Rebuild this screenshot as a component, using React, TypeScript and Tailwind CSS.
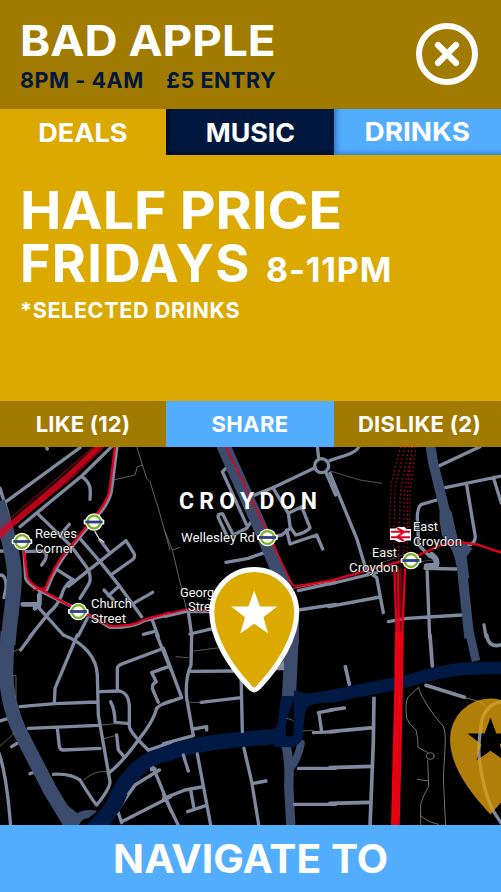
import React from "react";

const GREY = "#7f899f";
const SLATE = "#3c4c6c";
const NAVY = "#001a45";
const RED = "#e2001f";

type TileProps = { x: number; y: number; children: React.ReactNode };

// Each map sheet is drawn at three units to the pixel.
function Tile({ x, y, children }: TileProps) {
  return <g transform={`translate(${x} ${y}) scale(0.33333)`}>{children}</g>;
}

function Roundel({ x, y }: { x: number; y: number }) {
  return (
    <g transform={`translate(${x} ${y})`}>
      <circle r="8.8" fill="#fff" />
      <rect x="-10.3" y="-2.6" width="20.6" height="5.2" rx="1" fill="#fff" />
      <circle r="6.4" fill="#fff" stroke="#79b51c" strokeWidth="2.3" />
      <rect x="-8.6" y="-1.4" width="17.2" height="2.8" fill="#2d3e8c" />
    </g>
  );
}

function Label({ x, y, w, children }: { x: number; y: number; w: number; children: string }) {
  return (
    <text x={x} y={y} textLength={w} lengthAdjust="spacingAndGlyphs" fontSize="13.5" fill="#f4f4f4" stroke="#000" strokeWidth="1" paintOrder="stroke" strokeLinejoin="round">
      {children}
    </text>
  );
}

const pin = "M0 78 C-2 78 -4 76 -6 73.5 C-24 54 -42.5 26 -42.5 0 A42.5 42.5 0 0 1 42.5 0 C42.5 26 24 54 6 73.5 C4 76 2 78 0 78 Z";
const star = "M0 -21.5 L5.8 -5.5 L23 -5.5 L9.2 5.2 L14 21.5 L0 11.8 L-14 21.5 L-9.2 5.2 L-23 -5.5 L-5.8 -5.5 Z";

function CityMap() {
  return (
    <svg className="block h-[378px] w-full bg-black font-['Roboto',sans-serif] font-normal" viewBox="0 447 501 378" fill="none">
      <g strokeLinecap="round" strokeLinejoin="round">
        <Tile x={0} y={445}>
          <g stroke={GREY} strokeWidth="10">
            <path d="M15 172 L240 8 M135 -4 L142 12 M335 5 L245 93 L60 245 M245 95 C275 115 272 135 270 163 M112 205 L215 305 L262 370 Q278 400 265 420 L240 460" />
            <path d="M0 318 H20 M75 320 L130 318 Q145 325 135 345 L125 360 M235 275 L300 350 L360 425 L425 515 M300 285 L325 318 M205 424 L378 287 L402 325 Q406 335 400 342 L335 388 M165 370 L220 405" />
            <path d="M215 405 Q190 425 185 450 Q170 485 150 500 L90 575 M120 440 L118 490 L190 570 M312 435 L340 465 M325 452 L355 425 M400 475 L458 442 M455 520 L475 575 M430 568 L462 560 M262 520 L235 572 M180 270 L208 238" />
            <path d="M0 390 Q20 390 18 430 L12 458" />
            <path strokeWidth="14" d="M68 478 H118 M118 450 V478 L105 490" />
            <path d="M351 5 L334 140 Q324 180 290 215 L210 312 Q168 360 140 435 M72 320 L77 400 Q83 417 120 437 L200 477 Q260 505 330 547 Q400 548 430 528 L510 508" />
            <path d="M0 130 L22 200 L28 225" />
          </g>
          <path stroke={SLATE} strokeWidth="45" strokeLinecap="butt" d="M-8 170 C12 230 38 310 43 380 C46 440 30 510 24 600" />
          <g stroke={RED}>
            <path strokeWidth="18" opacity=".75" d="M300 3 L200 98 L-5 270" />
            <path strokeWidth="2.5" d="M284 3 L135 132 L-5 250 M295 3 L140 145 L-5 268 M305 3 L175 125 L-5 283 M315 3 L215 100 L40 240 L-5 290" />
            <path strokeWidth="7" d="M345 5 L328 140 Q318 175 287 210 L200 318 Q164 358 133 437" />
            <path strokeWidth="7" d="M72 320 L82 395 Q85 412 120 432 L205 480 Q260 505 330 543 Q400 545 430 525 L510 503" />
            <path strokeWidth="4" d="M100 435 L135 428" />
          </g>
          <path stroke="#777" strokeWidth="2.5" d="M410 5 L440 100 L450 110 L475 190 L510 315 M340 105 L405 90 L412 65 L428 60" />
          <path stroke="#ddd" strokeWidth="4" d="M285 260 L298 282 L312 291" />
        </Tile>

        <Tile x={165} y={445}>
          <g stroke={GREY} strokeWidth="10">
            <path d="M183 70 L172 80 L245 240 M187 275 L160 218 Q156 205 173 207 L205 270 L245 250 L255 235 M183 352 L250 340 L300 322" />
            <path d="M265 152 L330 125 L450 68 M456 -5 L461 40 M484 85 L512 150 M325 130 L370 205 L376 250 L350 270 L325 275 M370 205 L410 185 L435 248 Q425 262 392 270 L375 245 M365 255 L375 297 L455 270 L473 312" />
            <circle cx="470" cy="62" r="21" />
            <path d="M400 437 L512 412 M400 495 L512 478 M70 500 L80 570 M75 567 L145 550 M0 514 L60 500 H140" />
          </g>
          <path stroke={SLATE} strokeWidth="42" strokeLinecap="butt" d="M172 -5 L280 235 L355 415 L382 500 L380 600" />
          <path stroke={RED} strokeWidth="5" d="M180 0 L260 165 L380 415 Q384 424 400 422 L512 404 M0 508 L60 494 H130" />
          <path stroke="#ff4055" strokeWidth="3" d="M385 430 L512 407" />
          <path stroke="#777" strokeWidth="2.5" d="M0 260 L22 315 L45 307 M22 315 L65 495" />
        </Tile>

        <Tile x={330} y={445}>
          <g stroke={GREY} strokeWidth="10">
            <path d="M0 46 L50 30 Q80 20 87 5 M0 85 L80 280 L110 380 L140 397 L160 503 M-4 485 L150 456 M0 417 L140 383" />
            <path d="M325 64 L450 5 M335 130 L515 93 M410 120 L436 275 Q435 297 415 300 M490 97 L514 175 M320 165 L275 178 Q262 185 262 220 L266 300 L300 335 M285 370 L380 372 M291 370 L299 575 M175 530 L230 520 L395 510 M462 540 L468 575" />
            <path strokeWidth="18" d="M305 330 Q325 345 318 362 L290 364" />
          </g>
          <path stroke="#666" strokeWidth="2.5" d="M0 78 L90 105 L155 115" />
          <path stroke={SLATE} strokeWidth="30" strokeLinecap="butt" d="M300 -5 L310 55 L343 190 L370 290 Q397 340 400 410 L418 580" />
          <path fill={SLATE} d="M330 165 L365 200 L383 285 L428 310 L410 335 L418 400 L385 400 L378 335 L335 270 L328 225 Z" />
          <path stroke={RED} strokeWidth="3.5" strokeDasharray="4 8" strokeLinecap="butt" d="M212 5 L183 120 L178 265 M225 5 L195 130 L190 370 M238 5 L211 140 L205 370 M248 5 L223 140 L221 370 M258 5 L240 140 L238 265 M246 5 L233 140 L231 370" />
          <path stroke={RED} strokeWidth="7" strokeLinecap="butt" d="M193 375 L201 590 M204 370 L207 590 M225 370 L216 590" />
          <path stroke={RED} strokeWidth="3" strokeLinecap="butt" d="M213 370 L213 590" />
          <path stroke={RED} strokeWidth="7" d="M0 408 L130 372 L240 342 L340 297 L395 293 L440 298 L515 323" />
          <path stroke="#555" strokeWidth="2.5" d="M150 355 L220 330 M270 350 L310 345" />
        </Tile>

        <Tile x={0} y={635}>
          <path stroke={NAVY} strokeWidth="48" strokeLinecap="butt" d="M260 600 Q335 540 360 470 Q410 375 515 348" />
          <g stroke={GREY} strokeWidth="10">
            <path d="M95 0 L62 45 M190 0 C255 25 290 70 292 120 L295 240 L330 440 Q330 460 290 510 Q280 500 240 435 Q210 415 160 418 M232 0 L165 160 L163 203 M60 215 L165 206 L290 201 M85 280 L295 271 M172 280 L178 335 Q180 345 190 345 L300 340" />
            <path d="M300 170 L360 168 Q385 175 388 210 L388 275 Q392 295 445 345 M352 165 V98 Q355 90 370 85 L485 42 M470 0 L512 103 M505 95 L455 113 L469 140 Q450 150 461 170 L475 202 M332 200 Q345 225 345 262 L382 265 M350 300 L355 345 L372 365" />
            <path d="M325 415 Q365 385 415 315 Q460 260 470 220 Q480 208 512 198 M445 345 L512 323 M90 416 L105 411 M-3 355 Q20 420 32 575 M0 258 L25 250 L60 320 L35 335 M352 525 L405 450 L478 405 M460 398 L514 530 M352 525 L365 563 M365 560 L512 485" />
          </g>
          <path fill={GREY} d="M450 397 h20 v12 h-20z" />
          <path stroke={SLATE} strokeWidth="43" strokeLinecap="butt" d="M23 -10 L18 110 Q20 200 57 285 L150 465 L225 590" />
          <path fill={SLATE} d="M190 500 L232 535 Q255 520 292 528 L265 550 Q245 548 235 575 H200 Z" />
          <path stroke="#776f6b" strokeWidth="2.5" d="M40 50 L58 42 M38 122 H48 V190 M0 333 L45 293 M252 434 Q285 405 320 410 M305 270 L380 263 M308 312 L345 302" />
          <path stroke={NAVY} strokeWidth="48" strokeLinecap="butt" d="M260 600 Q335 540 360 470" />
        </Tile>

        <Tile x={165} y={635}>
          <path stroke={SLATE} strokeWidth="42" strokeLinecap="butt" d="M381 -10 L372 185" />
          <path stroke={SLATE} strokeWidth="28" strokeLinecap="butt" d="M362 325 Q376 390 371 450 L378 580" />
          <path stroke={SLATE} strokeWidth="23" d="M408 325 Q400 370 376 400" />
          <path stroke={NAVY} strokeWidth="46" strokeLinecap="butt" d="M-10 362 C90 320 200 318 350 302" />
          {/* Underpass ramps around the central island */}
          <path fill={NAVY} fillRule="evenodd" d="M348 184 L386 184 L388 166 L425 176 L515 162 V200 L445 208 Q419 212 418 250 L414 305 Q405 335 375 337 L325 335 V285 Q338 280 341 240 Z M386 192 L372 235 L363 270 L362 300 Q374 312 386 298 Z" />
          <g stroke={GREY} strokeWidth="10">
            <path d="M80 0 L78 90 Q60 130 65 190 L85 302 L-4 326 M78 109 L210 108 M-5 40 L50 188 L-4 207 M228 110 L232 290 M108 202 L228 188 M85 282 L125 275 V285 M55 360 L70 408 M97 357 L138 575 M-4 490 L60 465 L110 456 M78 470 L86 515 M68 530 L122 512 M-4 480 L42 575 M237 340 L260 440 L282 575 M265 445 L303 438 M400 400 H512 M388 508 H512 M460 233 L502 225 M462 235 L470 290 M445 293 L512 290" />
          </g>
          <path fill="#7f899f" d="M330 106 L357 75 V106 Z" />
          <path stroke="#706a67" strokeWidth="2.5" d="M85 48 L165 38 M33 65 L70 68 M68 202 H108 M365 250 L385 256 M415 288 L445 286" />
        </Tile>

        <Tile x={330} y={635}>
          <path stroke={NAVY} strokeWidth="38" strokeLinecap="butt" d="M-5 186 Q90 167 190 147 C250 137 330 103 415 101 L520 98" />
          <path stroke={SLATE} strokeWidth="26" strokeLinecap="butt" d="M418 -10 L438 78" />
          <g stroke={GREY} strokeWidth="11">
            <path d="M46 95 L58 148 M0 225 L43 219 M0 290 L130 278 M0 398 L125 394 M0 505 L120 502 M300 0 L307 93 M470 0 Q475 32 500 32 L518 29 M288 151 L403 187" />
            <path strokeLinecap="butt" d="M132 185 L130 320 L120 575" />
            <path strokeWidth="10" d="M515 200 Q470 207 456 255 Q443 330 448 370 Q460 470 488 525 L514 565" />
          </g>
          <path stroke="#77716e" strokeWidth="3" d="M265 158 L235 185 Q224 200 230 250 Q235 265 258 285 Q265 310 264 337 L292 352 M293 375 L296 455 Q275 490 272 510 V575 M262 433 L296 438 M272 542 Q290 560 325 568 M265 158 Q280 205 340 275 Q348 290 345 340 L340 430 L347 575 M405 188 L450 200 L478 222" />
          <ellipse cx="301" cy="363" rx="12" ry="10" stroke="#77716e" strokeWidth="3" />
          <path stroke="#f20012" strokeWidth="26" strokeLinecap="butt" d="M208 -10 L206 150 L196 575" />
          <path stroke="#970817" strokeWidth="1.5" d="M203 -10 L204 120 L191 575 M213 0 L211 200 L202 575" />
        </Tile>
      </g>

      <g>
        <text x="179" y="509" fontSize="23" fontWeight="700" fill="#fff" textLength="138" lengthAdjust="spacing">CROYDON</text>
        <Label x={35} y={538} w={42}>Reeves</Label>
        <Label x={35} y={552.5} w={39}>Corner</Label>
        <Label x={91} y={608} w={41}>Church</Label>
        <Label x={91} y={622.5} w={35}>Street</Label>
        <Label x={181} y={542} w={74}>Wellesley Rd</Label>
        <Label x={180} y={596.5} w={41}>George</Label>
        <Label x={188} y={610.5} w={34}>Street</Label>
        <Label x={413} y={531} w={25}>East</Label>
        <Label x={413} y={545.5} w={49}>Croydon</Label>
        <Label x={372} y={557} w={25}>East</Label>
        <Label x={349} y={571.5} w={49}>Croydon</Label>
      </g>
      <Roundel x={22} y={541.5} />
      <Roundel x={94} y={522} />
      <Roundel x={78.3} y={611.5} />
      <Roundel x={267.5} y={537.5} />
      <Roundel x={411} y={560.5} />
      <g transform="translate(400.5 534.5)">
        <path fill="#fff" d="M-10.5 -6 H-5 L-3 -7.5 H4 L6 -5.5 H10.5 V6 H6 L3 7.5 H-2 L-6 5.5 H-10.5 Z" />
        <path stroke="#e2001f" strokeWidth="2" d="M-9.5 -2.7 H9.5 M-9.5 2.7 H9.5 M-3.5 -6.3 L3.5 -2.7 L-3.5 2.7 L3.5 6.3" />
      </g>

      <g transform="translate(490.5 739)">
        <path fill="#dc9f0c" fillOpacity=".8" fillRule="evenodd" d="M0 75.5 C-9 65 -40.5 34 -40.5 0 A40.5 40.5 0 0 1 40.5 0 C40.5 34 9 65 0 75.5 Z M0 -21.5 L-5.8 -5.5 H-23 L-9.2 5.2 L-14 21.5 L0 11.8 L14 21.5 L9.2 5.2 L23 -5.5 H5.8 Z" />
      </g>
      <g transform="translate(254.2 612)">
        <path d={pin} fill="#dba900" stroke="#fff" strokeWidth="5" />
        <path d={star} fill="#fff" />
      </g>
    </svg>
  );
}

export default function App() {
  return (
    <main className="flex h-[892px] w-[501px] flex-col overflow-hidden bg-[#dba900] font-['Inter','Liberation_Sans',sans-serif] font-bold text-white">
      <header className="flex h-[109px] shrink-0 items-start justify-between bg-[#a17a00] pr-[23px] pl-5">
        <div className="pt-[19px] whitespace-nowrap">
          <h1 className="w-fit origin-left scale-x-[1.065] text-[43px] leading-[43px]">BAD APPLE</h1>
          <p className="flex w-fit gap-[22.5px] pt-[3px] text-[21.5px] leading-[30px] tracking-[0.55px] text-[#00183f]">
            <span>8PM - 4AM</span>
            <span>£5 ENTRY</span>
          </p>
        </div>
        <button aria-label="Close" className="mt-[23px] size-[62px]">
          <svg viewBox="0 0 62 62" fill="none" stroke="#fff">
            <circle cx="31" cy="31" r="28" strokeWidth="6" />
            <path d="M22 22 L40 40 M40 22 L22 40" strokeWidth="6.2" strokeLinecap="round" />
          </svg>
        </button>
      </header>

      <nav className="grid h-[46px] shrink-0 grid-cols-[166px_168px_167px] text-[26px] leading-[44px]">
        <button className="pt-[2px]"><span className="inline-block scale-x-[1.04]">DEALS</span></button>
        <button className="bg-[#00183f] pt-[2px] shadow-[inset_4px_-3px_5px_-1px_#000b20]"><span className="inline-block scale-x-[1.03]">MUSIC</span></button>
        <button className="bg-[#52adff] shadow-[inset_4px_-3px_5px_-1px_#337eca]"><span className="inline-block scale-x-[1.07]">DRINKS</span></button>
      </nav>

      <section className="h-[246px] shrink-0 pt-[29px] pl-5 whitespace-nowrap">
        <h2 className="text-[52px] leading-[53px]">
          <span className="block w-fit origin-left scale-x-[1.065]">HALF PRICE</span>
          <span className="flex items-baseline gap-[15.5px]">
            <span className="tracking-[1.3px]">FRIDAYS</span>
            <span className="text-[34px] leading-none tracking-[0.85px]">8-11PM</span>
          </span>
        </h2>
        <p className="pt-[5px] text-[21.5px] leading-[30px] tracking-[0.65px]">*SELECTED DRINKS</p>
      </section>

      <div className="grid h-[46px] shrink-0 grid-cols-[166px_168px_167px] text-[22px] leading-[46px]">
        <button className="bg-[#a17a00] tracking-[0.2px]">LIKE (12)</button>
        <button className="bg-[#52adff] tracking-[0.4px]">SHARE</button>
        <button className="bg-[#a17a00] pl-1 tracking-[0.3px]">DISLIKE (2)</button>
      </div>

      <CityMap />

      <button className="flex h-[67px] shrink-0 items-center justify-center bg-[#52adff] text-[39px] leading-[67px]">
        <span className="scale-x-[1.045]">NAVIGATE TO</span>
      </button>
    </main>
  );
}
